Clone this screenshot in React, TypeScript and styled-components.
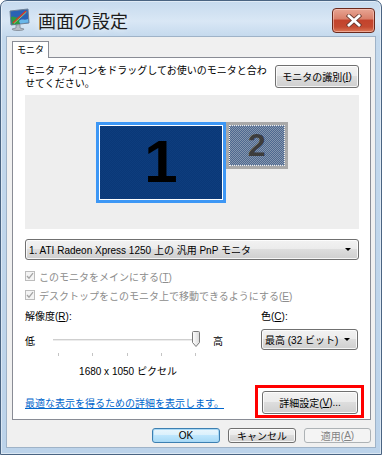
import styled, { createGlobalStyle, css } from 'styled-components';

const uiFont = `"Liberation Sans", "Noto Sans CJK JP", sans-serif`;

const GlobalStyle = createGlobalStyle`
  html, body {
    margin: 0;
    padding: 0;
    background: #ffffff;
  }
  body {
    font-family: ${uiFont};
  }
`;

const Window = styled.div`
  width: 380px;
  height: 453px;
  border: 1px solid #4a6482;
  border-radius: 7px 7px 0 0;
  background: linear-gradient(180deg, #c6daee 0px, #d9e7f5 20px, #c4d9ed 36px, #bcd3ea 100%);
  display: flex;
  flex-direction: column;
  box-shadow: inset 0 0 0 1px rgba(255, 255, 255, 0.45);
`;

const TitleBar = styled.div`
  height: 35px;
  display: flex;
  align-items: flex-start;
  padding-left: 7px;
`;

const TitleIcon = styled.svg`
  margin-top: 7px;
  flex: none;
`;

const TitleText = styled.div`
  margin: 8px 0 0 7px;
  font-family: "Noto Sans CJK JP", sans-serif;
  font-size: 18px;
  line-height: 22px;
  color: #1c1c1c;
  text-shadow: 0 0 6px rgba(255, 255, 255, 0.9);
  flex: 1;
`;

const CloseButton = styled.div`
  width: 43px;
  height: 25px;
  box-sizing: border-box;
  margin: 7px 6px 0 0;
  border: 1px solid #6b2a1d;
  border-radius: 4px;
  background: linear-gradient(180deg, #e8a593 0%, #d9806b 42%, #c3432c 50%, #c44a31 78%, #de7a58 100%);
  box-shadow: inset 0 0 0 1px rgba(255, 210, 200, 0.55);
  display: flex;
  align-items: center;
  justify-content: center;
`;

const Client = styled.div`
  flex: 1;
  margin: 0 5px 6px 5px;
  border: 1px solid #9fb3c8;
  background: #f0f0f0;
  padding: 4px 4px 4px 5px;
  display: flex;
  flex-direction: column;
`;

const TabStrip = styled.div`
  display: flex;
  position: relative;
  z-index: 1;
`;

const Tab = styled.div`
  width: 37px;
  height: 17px;
  box-sizing: border-box;
  border: 1px solid #898c95;
  border-bottom: none;
  background: #ffffff;
  margin-bottom: -1px;
  font-family: "Noto Sans CJK JP", sans-serif;
  font-size: 9px;
  line-height: 15px;
  text-align: center;
  color: #000;
`;

const Panel = styled.div`
  border: 1px solid #898c95;
  background: #ffffff;
  padding: 7px 11px 1px 12px;
  font-size: 10px;
  color: #000;
`;

const Header = styled.div`
  display: flex;
  justify-content: space-between;
  align-items: flex-start;
  height: 30px;
`;

const Description = styled.div`
  width: 246px;
  line-height: 13px;
  margin-top: -1px;
`;

const buttonLook = css`
  box-sizing: border-box;
  border: 1px solid #707070;
  border-radius: 3px;
  background: linear-gradient(180deg, #f2f2f2 0%, #ebebeb 49%, #dddddd 50%, #cfcfcf 100%);
  box-shadow: inset 0 0 0 1px rgba(255, 255, 255, 0.8);
  font-family: ${uiFont};
  font-size: 10px;
  color: #000;
`;

const PushButton = styled.div<{ $w: number; $h: number; $kind?: 'default' | 'disabled' }>`
  ${buttonLook};
  width: ${p => p.$w}px;
  height: ${p => p.$h}px;
  display: flex;
  align-items: center;
  justify-content: center;
  flex: none;
  ${p => p.$kind === 'default' && css`
    border-color: #3c7fb1;
    box-shadow: inset 0 0 0 1px #a8d8f5;
    background: linear-gradient(180deg, #eaf6fd 0%, #d9f0fc 49%, #bee6fd 50%, #a7d9f5 100%);
  `}
  ${p => p.$kind === 'disabled' && css`
    border-color: #adb2b5;
    background: #f4f4f4;
    box-shadow: none;
    color: #838383;
  `}
`;

const Mnemonic = styled.span`
  text-decoration: underline;
`;

const Preview = styled.div`
  height: 134px;
  background: #eeeeee;
  display: flex;
  align-items: center;
  justify-content: center;
`;

const MonitorGroup = styled.div`
  display: flex;
  align-items: flex-start;
`;

const MonitorOne = styled.div`
  width: 130px;
  height: 81px;
  box-sizing: border-box;
  border: 3px solid #3d97f5;
  background: repeating-conic-gradient(#0a3877 0 25%, #0e3d7e 0 50%) 0 0 / 2px 2px;
  box-shadow: inset 0 0 0 1px #ffffff;
  display: flex;
  align-items: center;
  justify-content: center;
  font-family: "Liberation Sans", sans-serif;
  font-weight: bold;
  font-size: 60px;
  line-height: 1;
  color: #000;
`;

const MonitorTwo = styled.div`
  width: 62px;
  height: 47px;
  box-sizing: border-box;
  border: 3px solid #a9a9a9;
  background: repeating-conic-gradient(#4d6890 0 25%, #8596ad 0 50%) 0 0 / 2px 2px;
  outline: 1px dotted #f0f0f0;
  outline-offset: -4px;
  display: flex;
  align-items: center;
  justify-content: center;
  font-family: "Liberation Sans", sans-serif;
  font-weight: bold;
  font-size: 32px;
  line-height: 1;
  color: #3d3d3d;
`;

const Combo = styled.div<{ $w?: number; $h: number; $top: number }>`
  ${buttonLook};
  width: ${p => (p.$w ? `${p.$w}px` : 'auto')};
  height: ${p => p.$h}px;
  margin-top: ${p => p.$top}px;
  display: flex;
  align-items: center;
  justify-content: space-between;
  padding: 0 7px 0 3px;
  white-space: nowrap;
`;

const Arrow = styled.span`
  width: 0;
  height: 0;
  border-left: 3px solid transparent;
  border-right: 3px solid transparent;
  border-top: 3px solid #000;
`;

const CheckRow = styled.div<{ $top: number }>`
  display: flex;
  align-items: center;
  gap: 4px;
  height: 14px;
  margin-top: ${p => p.$top}px;
  color: #8d8d8d;
`;

const CheckBox = styled.span`
  width: 8px;
  height: 8px;
  border: 1px solid #bcbcbc;
  background: #f4f4f4;
  display: flex;
  align-items: center;
  justify-content: center;
`;

const Settings = styled.div`
  display: grid;
  grid-template-columns: 236px 1fr;
  margin-top: 8px;
`;

const Label = styled.div`
  line-height: 13px;
  height: 13px;
`;

const SliderRow = styled.div`
  display: flex;
  align-items: center;
  height: 22px;
  margin-top: 6px;
`;

const SliderEnd = styled.span<{ $w: number }>`
  width: ${p => p.$w}px;
  flex: none;
`;

const Track = styled.div`
  position: relative;
  width: 146px;
  height: 1px;
  background: #cfcfcf;
  border-bottom: 1px solid #ececec;
  margin-right: 14px;
`;

const Thumb = styled.svg`
  position: absolute;
  left: 139px;
  top: -8px;
`;

const Ticks = styled.div`
  display: flex;
  justify-content: space-between;
  width: 138px;
  margin: 2px 0 0 33px;
`;

const Tick = styled.span`
  width: 1px;
  height: 3px;
  background: #c4c4c4;
`;

const PixelText = styled.div`
  width: 150px;
  margin: 9px 0 0 28px;
  line-height: 14px;
  text-align: center;
`;

const BottomRow = styled.div`
  display: flex;
  justify-content: space-between;
  align-items: center;
  margin-top: 6px;
`;

const HelpLink = styled.a`
  color: #0066cc;
  text-decoration: underline;
  margin-top: 2px;
`;

const Highlight = styled.div`
  border: 3px solid #ff0000;
  padding: 3px 3px 1px 4px;
  margin-right: -5px;
`;

const Footer = styled.div`
  display: flex;
  justify-content: flex-end;
  gap: 8px;
  margin-top: 8px;
`;

const MonitorIcon = () => (
  <TitleIcon width="23" height="24" viewBox="0 0 23 24">
    <path d="M2 3 L20 1 L21 15 L3 17 Z" fill="#2a62b4" stroke="#6f8296" strokeWidth="1" />
    <path d="M3 9 C6 7 8 11 11 9 L12 16 L4 16.6 Z" fill="#2e9a43" />
    <path d="M11 13 C14 10 16 13 20 11 L20.5 14.5 L12 15.5 Z" fill="#6ab7e8" />
    <path d="M5 15 L18 3" stroke="#d8352a" strokeWidth="1.6" />
    <path d="M6 15.5 L18.5 4" stroke="#9be07a" strokeWidth="0.8" />
    <path d="M8 17 L8 20 L4 21 C4 23 16 23 16 21 L12 20 L12 16.6 Z" fill="#b8bec6" stroke="#7d8792" strokeWidth="0.8" />
  </TitleIcon>
);

const CloseGlyph = () => (
  <svg width="16" height="13" viewBox="0 0 16 13">
    <path d="M3 2 L13 11 M13 2 L3 11" stroke="#6b3a30" strokeWidth="4.4" strokeLinecap="square" />
    <path d="M3 2 L13 11 M13 2 L3 11" stroke="#ffffff" strokeWidth="2.8" strokeLinecap="square" />
  </svg>
);

const CheckMark = () => (
  <svg width="8" height="8" viewBox="0 0 8 8">
    <path d="M1 4 L3 6.2 L7 1.2" fill="none" stroke="#a4a4a4" strokeWidth="1.3" />
  </svg>
);

const SliderThumb = () => (
  <Thumb width="8" height="16" viewBox="0 0 8 16">
    <defs>
      <linearGradient id="thumbFill" x1="0" y1="0" x2="1" y2="0">
        <stop offset="0" stopColor="#ffffff" />
        <stop offset="1" stopColor="#d9d9d9" />
      </linearGradient>
    </defs>
    <path d="M0.5 1.5 Q0.5 0.5 1.5 0.5 L6.5 0.5 Q7.5 0.5 7.5 1.5 L7.5 11.5 L4 15.5 L0.5 11.5 Z" fill="url(#thumbFill)" stroke="#7a7a7a" />
  </Thumb>
);

export default function App() {
  return (
    <>
      <GlobalStyle />
      <Window>
        <TitleBar>
          <MonitorIcon />
          <TitleText>画面の設定</TitleText>
          <CloseButton>
            <CloseGlyph />
          </CloseButton>
        </TitleBar>
        <Client>
          <TabStrip>
            <Tab>モニタ</Tab>
          </TabStrip>
          <Panel>
            <Header>
              <Description>モニタ アイコンをドラッグしてお使いのモニタと合わせてください。</Description>
              <PushButton $w={84} $h={23}>
                モニタの識別(<Mnemonic>I</Mnemonic>)
              </PushButton>
            </Header>
            <Preview>
              <MonitorGroup>
                <MonitorOne>1</MonitorOne>
                <MonitorTwo>2</MonitorTwo>
              </MonitorGroup>
            </Preview>
            <Combo $h={21} $top={10}>
              <span>1. ATI Radeon Xpress 1250 上の 汎用 PnP モニタ</span>
              <Arrow />
            </Combo>
            <CheckRow $top={9}>
              <CheckBox><CheckMark /></CheckBox>
              <span>このモニタをメインにする(<Mnemonic>T</Mnemonic>)</span>
            </CheckRow>
            <CheckRow $top={5}>
              <CheckBox><CheckMark /></CheckBox>
              <span>デスクトップをこのモニタ上で移動できるようにする(<Mnemonic>E</Mnemonic>)</span>
            </CheckRow>
            <Settings>
              <div>
                <Label>解像度(<Mnemonic>R</Mnemonic>):</Label>
                <SliderRow>
                  <SliderEnd $w={28}>低</SliderEnd>
                  <Track>
                    <SliderThumb />
                  </Track>
                  <span>高</span>
                </SliderRow>
                <Ticks>
                  <Tick />
                  <Tick />
                  <Tick />
                  <Tick />
                  <Tick />
                </Ticks>
                <PixelText>1680 x 1050 ピクセル</PixelText>
              </div>
              <div>
                <Label>色(<Mnemonic>C</Mnemonic>):</Label>
                <Combo $w={97} $h={21} $top={6}>
                  <span>最高 (32 ビット)</span>
                  <Arrow />
                </Combo>
              </div>
            </Settings>
            <BottomRow>
              <HelpLink href="#">最適な表示を得るための詳細を表示します。</HelpLink>
              <Highlight>
                <PushButton $w={96} $h={23}>
                  詳細設定(<Mnemonic>V</Mnemonic>)...
                </PushButton>
              </Highlight>
            </BottomRow>
          </Panel>
          <Footer>
            <PushButton $w={68} $h={15} $kind="default">OK</PushButton>
            <PushButton $w={68} $h={15}>キャンセル</PushButton>
            <PushButton $w={67} $h={15} $kind="disabled">
              適用(<Mnemonic>A</Mnemonic>)
            </PushButton>
          </Footer>
        </Client>
      </Window>
    </>
  );
}
